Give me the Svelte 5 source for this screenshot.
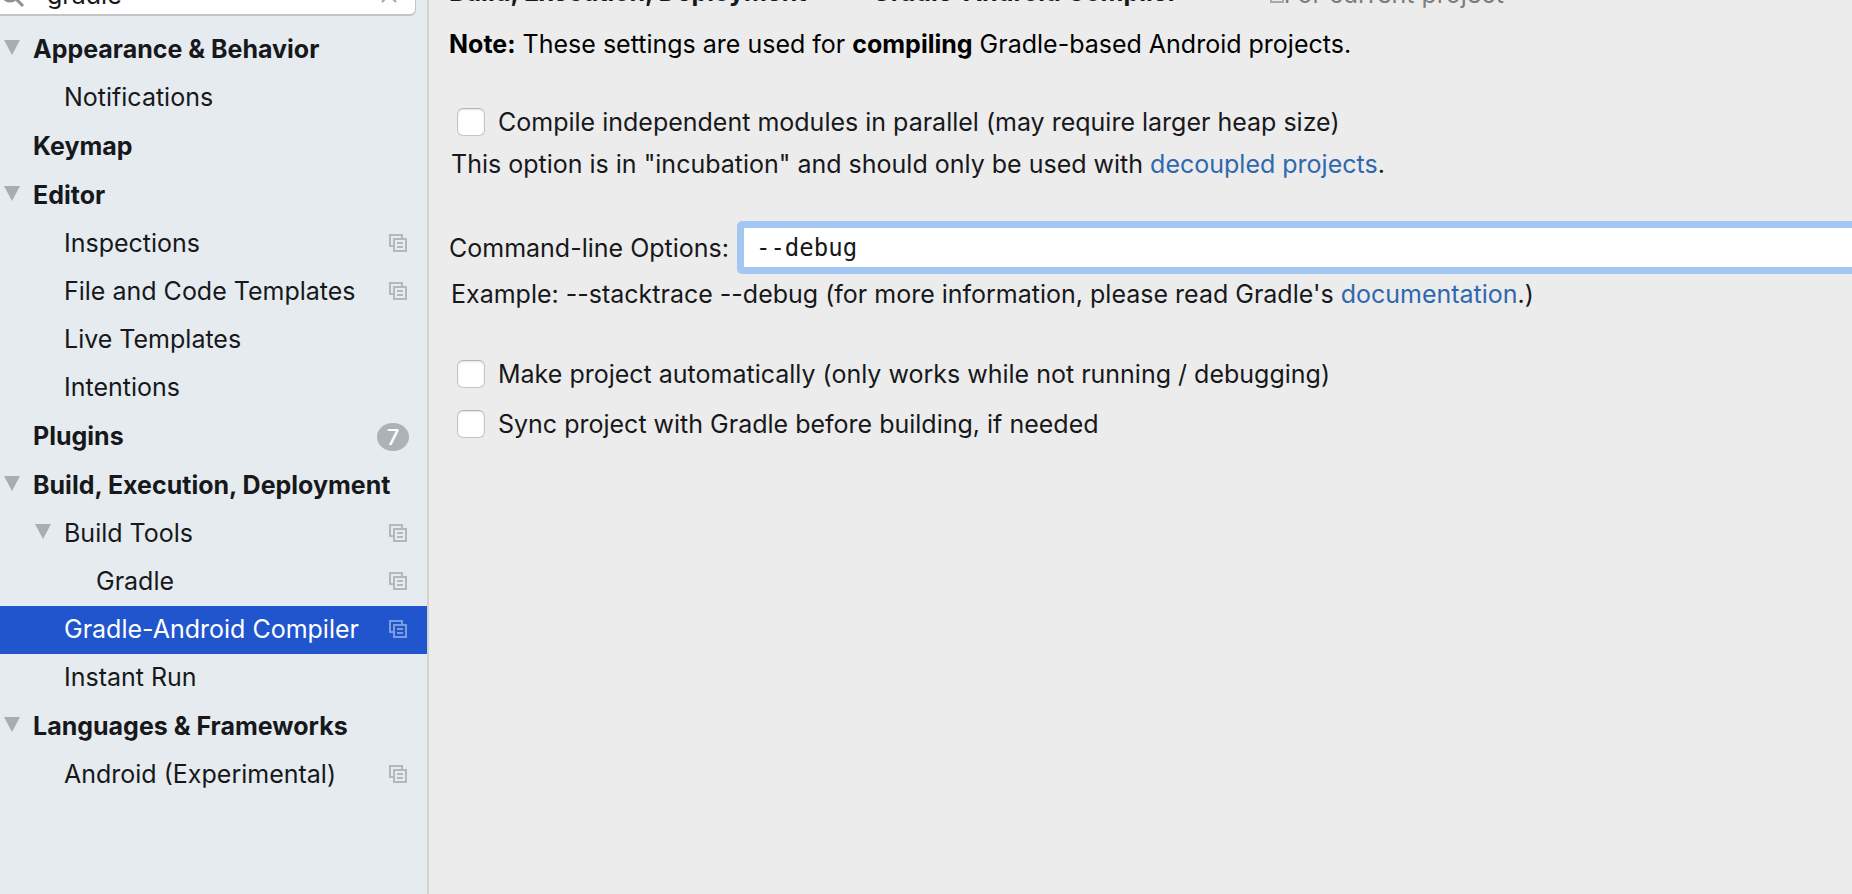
<script>
  const sections = [
    { label: 'Appearance & Behavior', open: true, items: [{ label: 'Notifications' }] },
    { label: 'Keymap', items: [] },
    {
      label: 'Editor',
      open: true,
      items: [
        { label: 'Inspections', scoped: true },
        { label: 'File and Code Templates', scoped: true },
        { label: 'Live Templates' },
        { label: 'Intentions' }
      ]
    },
    { label: 'Plugins', badge: 7, items: [] },
    {
      label: 'Build, Execution, Deployment',
      open: true,
      items: [
        { label: 'Build Tools', scoped: true, open: true },
        { label: 'Gradle', scoped: true, deep: true },
        { label: 'Gradle-Android Compiler', scoped: true, selected: true },
        { label: 'Instant Run' }
      ]
    },
    { label: 'Languages & Frameworks', open: true, items: [{ label: 'Android (Experimental)', scoped: true }] }
  ];
  let query = $state('gradle');
  let options = $state('--debug');
  let parallel = $state(false);
  let autoMake = $state(false);
  let sync = $state(false);
</script>

{#snippet arrow()}
  <svg class="arrow" viewBox="0 0 16 15" aria-hidden="true"><path d="M0 0H16L8 15Z" fill="#a9adb0" /></svg>
{/snippet}

{#snippet copies()}
  <svg class="copies" viewBox="0 0 18 18" fill="none" stroke="currentColor" stroke-width="2" aria-hidden="true">
    <path d="M4 12H1V1H13V4" />
    <path d="M5 5H17V17H5Z" />
    <path d="M8 9H14M8 13H14" />
  </svg>
{/snippet}

<div class="window">
  <aside>
    <div class="search">
      <svg class="lens" viewBox="0 0 26 26" fill="none" stroke="#8e9092" stroke-width="3" aria-hidden="true">
        <circle cx="11" cy="11" r="8" /><path d="M17 17L24 24" />
      </svg>
      <input type="text" aria-label="Search settings" bind:value={query} />
      <button type="button" aria-label="Clear search">
        <svg viewBox="0 0 16 16" fill="none" stroke="#a4a6a8" stroke-width="2" aria-hidden="true"><path d="M1 1L15 15M15 1L1 15" /></svg>
      </button>
    </div>
    <nav>
      {#each sections as section}
        <section>
          <button type="button" class="row top">
            <span class="slot">{#if section.open}{@render arrow()}{/if}</span>
            <span class="name">{section.label}</span>
            {#if section.badge}<span class="badge">{section.badge}</span>{/if}
          </button>
          {#each section.items as item}
            <button type="button" class="row child" class:deep={item.deep} class:selected={item.selected}>
              <span class="slot">{#if item.open}{@render arrow()}{/if}</span>
              <span class="name">{item.label}</span>
              {#if item.scoped}{@render copies()}{/if}
            </button>
          {/each}
        </section>
      {/each}
    </nav>
  </aside>

  <main>
    <header>
      <h1><span>Build, Execution, Deployment</span><span class="sep">›</span><span>Gradle-Android Compiler</span></h1>
      <div class="scope">{@render copies()}<span>For current project</span></div>
    </header>
    <p class="note"><b>Note:</b> These settings are used for <b>compiling</b> Gradle-based Android projects.</p>

    <label class="check"><input type="checkbox" bind:checked={parallel} />Compile independent modules in parallel (may require larger heap size)</label>
    <p class="hint">This option is in "incubation" and should only be used with <a href="#decoupled">decoupled projects</a>.</p>

    <div class="field">
      <label for="options">Command-line Options:</label>
      <input id="options" type="text" spellcheck="false" bind:value={options} />
    </div>
    <p class="hint example">Example: --stacktrace --debug (for more information, please read Gradle's <a href="#documentation">documentation</a>.)</p>

    <div class="checks">
      <label class="check"><input type="checkbox" bind:checked={autoMake} />Make project automatically (only works while not running / debugging)</label>
      <label class="check"><input type="checkbox" bind:checked={sync} />Sync project with Gradle before building, if needed</label>
    </div>
  </main>
</div>

<style>
  :global(body) {
    background: #ececec;
  }
  .window {
    display: flex;
    min-height: 100vh;
    overflow: hidden;
    box-sizing: border-box;
    background: #ececec;
    color: #17181b;
    font: 25px/28px Inter, "Liberation Sans", sans-serif;
  }
  button,
  input {
    font: inherit;
    color: inherit;
  }
  button {
    border: 0;
    padding: 0;
    background: none;
    text-align: left;
  }
  svg {
    display: block;
    flex: none;
  }
  aside {
    flex: none;
    width: 427px;
    background: #e6ebef;
    border-right: 2px solid #d0d2d4;
  }
  .search {
    display: flex;
    align-items: center;
    box-sizing: border-box;
    height: 42px;
    margin: -26px 11px 10px -8px;
    padding: 0 18px 0 6px;
    background: #fff;
    border: 1px solid #c3c5c7;
    border-bottom-width: 2px;
    border-radius: 6px;
  }
  .lens {
    width: 26px;
    height: 26px;
  }
  .search input {
    flex: 1;
    min-width: 0;
    border: 0;
    padding: 0 0 0 22px;
    background: none;
    outline: none;
  }
  .search button svg {
    width: 16px;
    height: 16px;
  }
  nav {
    display: flex;
    flex-direction: column;
    gap: 1px;
  }
  .row {
    display: flex;
    align-items: center;
    box-sizing: border-box;
    width: 100%;
    height: 48px;
    padding: 0 20px 0 4px;
    white-space: nowrap;
  }
  .slot {
    flex: none;
    width: 29px;
    padding-bottom: 6px;
  }
  .name {
    flex: 1;
    padding-bottom: 2px;
  }
  .top {
    font-weight: 700;
    padding-right: 18px;
  }
  .child {
    padding-left: 35px;
  }
  .deep {
    padding-left: 67px;
  }
  .selected {
    background: #2055ce;
    color: #fff;
  }
  .arrow {
    width: 16px;
    height: 15px;
  }
  .copies {
    width: 18px;
    height: 18px;
    color: #b1b8be;
  }
  .row .copies {
    margin-bottom: 2px;
  }
  .selected .copies {
    color: #7d9cdc;
  }
  .badge {
    width: 32px;
    height: 28px;
    border-radius: 50%;
    background: #abb2b8;
    color: #fff;
    font-size: 22px;
    font-weight: 500;
    text-align: center;
  }
  main {
    flex: 1;
    min-width: 0;
    padding-left: 20px;
    white-space: nowrap;
  }
  header {
    display: flex;
    gap: 88px;
    margin-top: -22px;
    height: 32px;
  }
  h1 {
    display: flex;
    gap: 28px;
    margin: 0;
    font-size: 25px;
    line-height: 28px;
    font-weight: 700;
  }
  .sep {
    font-weight: 400;
    color: #77797b;
  }
  .scope {
    display: flex;
    align-items: center;
    color: #7b7c7e;
  }
  .scope .copies {
    color: #a6a8aa;
  }
  p {
    margin: 0;
  }
  .note {
    margin: 20px 0 50px;
    color: #000;
  }
  .check {
    display: flex;
    align-items: center;
    gap: 13px;
    padding-left: 8px;
  }
  .check input {
    appearance: none;
    flex: none;
    width: 28px;
    height: 28px;
    margin: 0;
    background: #fff;
    border: 1px solid #c4c4c4;
    border-top-color: #b4b4b4;
    border-radius: 6px;
    box-shadow: inset 0 1px 2px #e2e2e2;
  }
  .hint {
    margin-top: 14px;
    padding-left: 2px;
  }
  a {
    color: #2f68ae;
    text-decoration: none;
  }
  .field {
    display: flex;
    align-items: center;
    gap: 8px;
    margin-top: 43px;
  }
  .field input {
    flex: 1;
    min-width: 0;
    box-sizing: border-box;
    height: 53px;
    margin-right: -12px;
    padding: 0 12px;
    border: 7px solid #a4c6f2;
    border-radius: 5px;
    background: #fff;
    outline: none;
    font-family: "DejaVu Sans Mono", monospace;
    font-size: 24px;
  }
  .example {
    margin-top: 6px;
  }
  .checks {
    display: flex;
    flex-direction: column;
    gap: 22px;
    margin-top: 52px;
  }
</style>
